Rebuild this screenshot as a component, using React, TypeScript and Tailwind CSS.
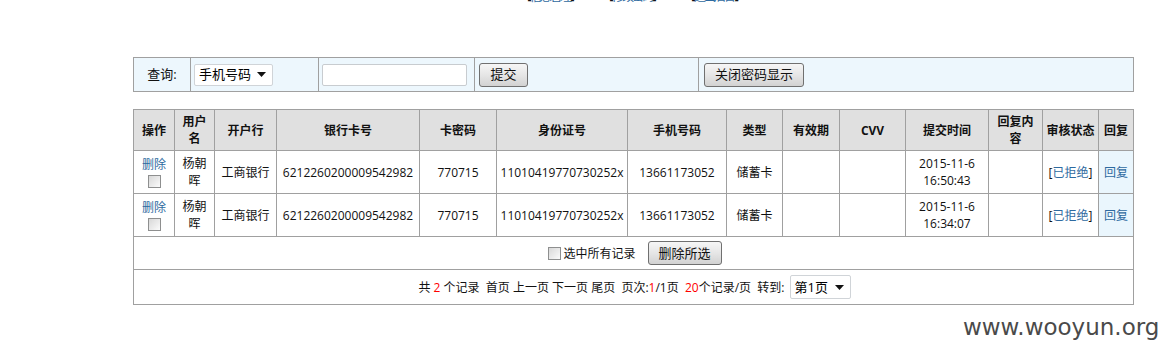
const FONT = '"Open Sans", "Noto Sans CJK SC", sans-serif'

const COLS = [41, 40, 62, 143, 77, 131, 99, 56, 57, 66, 83, 54, 56, 35]

const HEAD = ['操作', '用户名', '开户行', '银行卡号', '卡密码', '身份证号', '手机号码', '类型', '有效期', 'CVV', '提交时间', '回复内容', '审核状态', '回复']

const ROWS = [
  { time: ['2015-11-6', '16:50:43'] },
  { time: ['2015-11-6', '16:34:07'] },
]

function Caret() {
  return (
    <svg width="9" height="5" viewBox="0 0 9 5" aria-hidden>
      <path d="M0 0h9L4.5 5z" fill="#111" />
    </svg>
  )
}

function Check() {
  return (
    <span className="inline-block h-[13px] w-[13px] border border-[#8e8f8f] bg-gradient-to-br from-[#d8d8d8] to-[#fbfbfb] align-middle" />
  )
}

function Btn({ children, w }: { children: React.ReactNode; w: string }) {
  return (
    <span
      className={`inline-flex h-[24px] ${w} items-center justify-center rounded-[3px] border border-[#707070] bg-gradient-to-b from-[#f6f6f6] via-[#e6e6e6] to-[#d2d2d2] text-[13px] text-[#111]`}
    >
      {children}
    </span>
  )
}

function Link({ children }: { children: React.ReactNode }) {
  return <span className="text-[#2e6aa0]">{children}</span>
}

export default function App() {
  return (
    <div className="relative h-[357px] w-[1170px] overflow-hidden bg-white text-[#111]" style={{ fontFamily: FONT }}>
      {/* top nav, cut off by the window */}
      <div className="-mt-[11px] flex h-[16px] gap-[22px] pl-[520px] text-[12px] leading-[16px] tracking-[-2px]">
        <span>【<Link>信息管理</Link>】</span>
        <span>【<Link>修改密码</Link>】</span>
        <span>【<Link>退出后台</Link>】</span>
      </div>

      {/* search bar */}
      <table className="ml-[133px] mt-[52px] w-[1000px] table-fixed border-collapse bg-[#edf7fd] text-[13px]">
        <colgroup>
          <col className="w-[57px]" />
          <col className="w-[128px]" />
          <col className="w-[156px]" />
          <col className="w-[224px]" />
          <col className="w-[435px]" />
        </colgroup>
        <tbody>
          <tr className="h-[34px]">
            <td className="border border-[#a0a0a0] text-center">查询:</td>
            <td className="border border-[#a0a0a0] pl-[3px]">
              <span className="flex h-[22px] w-[79px] items-center justify-between rounded-[2px] border border-[#d0d4d8] bg-white pl-[4px] pr-[6px] text-[#000]">
                手机号码
                <Caret />
              </span>
            </td>
            <td className="border border-[#a0a0a0] pl-[3px]">
              <span className="block h-[22px] w-[145px] rounded-[2px] border border-[#c8ccd0] bg-white" />
            </td>
            <td className="border border-[#a0a0a0] pl-[4px]">
              <Btn w="w-[49px]">提交</Btn>
            </td>
            <td className="border border-[#a0a0a0] pl-[5px]">
              <Btn w="w-[100px]">关闭密码显示</Btn>
            </td>
          </tr>
        </tbody>
      </table>

      {/* records */}
      <table className="ml-[133px] mt-[17px] w-[1000px] table-fixed border-collapse text-[12px] leading-[17px]">
        <colgroup>
          {COLS.map((w, i) => (
            <col key={i} style={{ width: w }} />
          ))}
        </colgroup>
        <thead>
          <tr className="h-[41px] bg-[#e0e0e0]">
            {HEAD.map((h) => (
              <th key={h} className="border border-[#a0a0a0] px-[3px] text-center font-bold">
                {h}
              </th>
            ))}
          </tr>
        </thead>
        <tbody>
          {ROWS.map((r, i) => (
            <tr key={i} className="h-[43px]">
              <td className="border border-[#a0a0a0] text-center">
                <Link>删除</Link>
                <div className="flex justify-center pt-[2px]">
                  <Check />
                </div>
              </td>
              <td className="border border-[#a0a0a0] px-[6px] text-center">杨朝晖</td>
              <td className="border border-[#a0a0a0] text-center">工商银行</td>
              <td className="border border-[#a0a0a0] text-center">6212260200009542982</td>
              <td className="border border-[#a0a0a0] text-center">770715</td>
              <td className="border border-[#a0a0a0] text-center">11010419770730252x</td>
              <td className="border border-[#a0a0a0] text-center">13661173052</td>
              <td className="border border-[#a0a0a0] text-center">储蓄卡</td>
              <td className="border border-[#a0a0a0]" />
              <td className="border border-[#a0a0a0]" />
              <td className="border border-[#a0a0a0] text-center">
                {r.time[0]}
                <br />
                {r.time[1]}
              </td>
              <td className="border border-[#a0a0a0]" />
              <td className="border border-[#a0a0a0] text-center">
                [<Link>已拒绝</Link>]
              </td>
              <td className="border border-[#a0a0a0] bg-[#eaf6fd] text-center">
                <Link>回复</Link>
              </td>
            </tr>
          ))}
          <tr className="h-[33px]">
            <td colSpan={14} className="border border-[#a0a0a0]">
              <div className="flex items-center justify-center pl-[3px]">
                <Check />
                <span className="ml-[2px] mr-[12px]">选中所有记录</span>
                <Btn w="w-[74px]">删除所选</Btn>
              </div>
            </td>
          </tr>
          <tr className="h-[35px]">
            <td colSpan={14} className="border border-[#a0a0a0]">
              <div className="flex items-center justify-center whitespace-pre pl-[2px]">
                <span>
                  共 <span className="text-[#f00]">2</span> 个记录  首页 上一页 下一页 尾页  页次:
                  <span className="text-[#f00]">1</span>/1页  <span className="text-[#f00]">20</span>个记录/页  转到:{' '}
                </span>
                <span className="ml-[2px] flex h-[24px] w-[61px] items-center justify-between rounded-[2px] border border-[#d0d4d8] bg-white pl-[4px] pr-[6px] text-[13px] text-[#000]">
                  第1页
                  <Caret />
                </span>
              </div>
            </td>
          </tr>
        </tbody>
      </table>

      {/* watermark */}
      <div
        className="absolute left-[963px] top-[312px] text-[23px] leading-[30px] text-[#4a4a4a]"
        style={{ fontFamily: '"DejaVu Sans", sans-serif' }}
      >
        www.wooyun.org
      </div>
    </div>
  )
}
